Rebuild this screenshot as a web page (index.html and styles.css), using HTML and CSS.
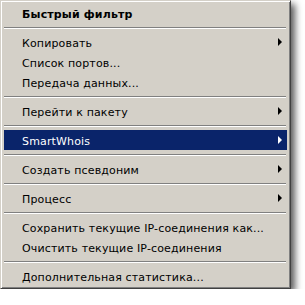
FILE: index.html
```html
<!DOCTYPE html>
<html>
<head>
<meta charset="utf-8">
<link rel="stylesheet" href="styles.css">
</head>
<body>
<div class="menu">
  <div class="item header"><span>Быстрый фильтр</span></div>
  <div class="sep"></div>
  <div class="item"><span>Копировать</span><i class="arrow"></i></div>
  <div class="item"><span>Список портов...</span></div>
  <div class="item"><span>Передача данных...</span></div>
  <div class="sep"></div>
  <div class="item"><span>Перейти к пакету</span><i class="arrow"></i></div>
  <div class="sep"></div>
  <div class="item active"><span>SmartWhois</span><i class="arrow"></i></div>
  <div class="sep"></div>
  <div class="item"><span>Создать псевдоним</span><i class="arrow"></i></div>
  <div class="sep"></div>
  <div class="item"><span>Процесс</span><i class="arrow"></i></div>
  <div class="sep"></div>
  <div class="item"><span>Сохранить текущие IP-соединения как...</span></div>
  <div class="item"><span>Очистить текущие IP-соединения</span></div>
  <div class="sep"></div>
  <div class="item"><span>Дополнительная статистика...</span></div>
</div>
</body>
</html>
```
FILE: styles.css
```css
html, body {
  margin: 0;
  padding: 0;
  background: #ffffff;
}
.menu {
  box-sizing: border-box;
  width: 291px;
  padding: 2px 3px;
  background: #d4d0c8;
  border-top: 1px solid #d4d0c8;
  border-left: 1px solid #d4d0c8;
  border-right: 1px solid #404040;
  border-bottom: 1px solid #404040;
  box-shadow: inset 1px 1px 0 #ffffff, inset -1px -1px 0 #808080, 4px 4px 7px rgba(0,0,0,0.65);
  font-family: "DejaVu Sans", Tahoma, sans-serif;
  font-size: 11px;
  letter-spacing: 0.15px;
  color: #000000;
}
.item {
  box-sizing: border-box;
  height: 20px;
  display: flex;
  align-items: center;
  justify-content: space-between;
  padding: 2px 5px 0 18px;
  white-space: nowrap;
}
.header {
  font-weight: bold;
}
.active {
  background: #0a246a;
  color: #ffffff;
}
.arrow {
  width: 0;
  height: 0;
  margin-top: -2px;
  border-top: 4px solid transparent;
  border-bottom: 4px solid transparent;
  border-left: 4px solid #000000;
}
.active .arrow {
  border-left-color: #ffffff;
}
.sep {
  height: 1px;
  margin: 4px 1px 3px 0;
  background: #808080;
  border-bottom: 1px solid #ffffff;
}
```
